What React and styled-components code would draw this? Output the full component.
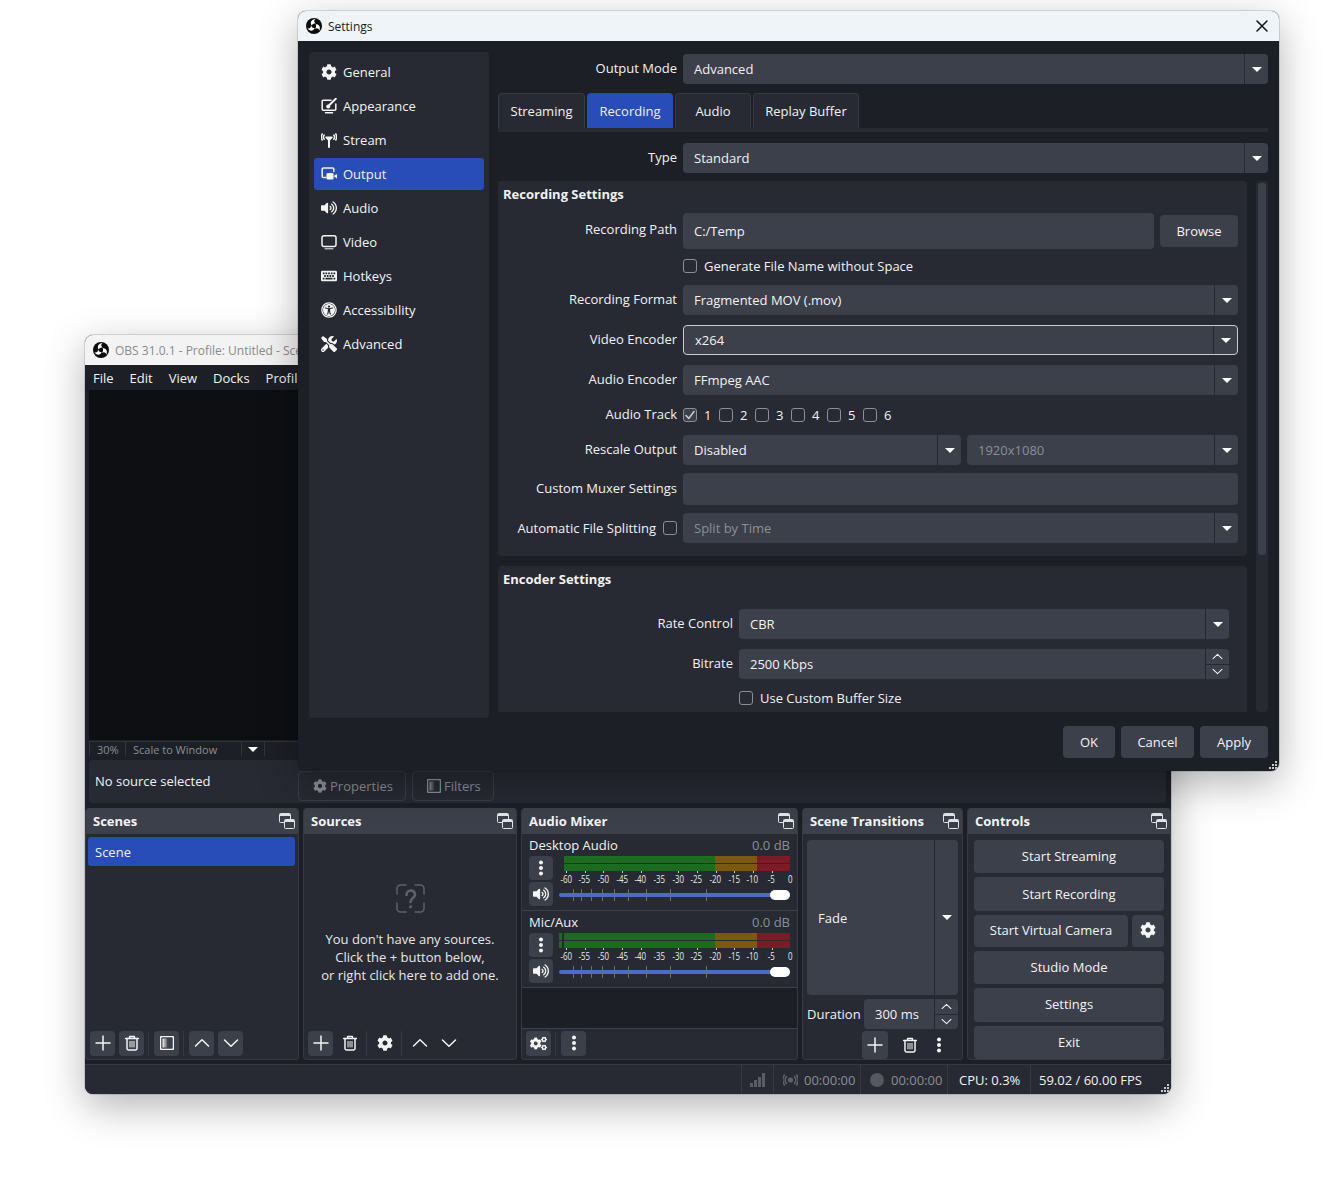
import React from 'react'
import styled, { createGlobalStyle } from 'styled-components'
import { FaCog, FaCogs, FaKeyboard, FaTools, FaUniversalAccess, FaVolumeUp } from 'react-icons/fa'

const bg = '#1d1f26'
const panel = '#272a33'
const field = '#3c404b'
const blue = '#284cb8'
const dim = '#8b8e95'

const Global = createGlobalStyle`
  html, body { margin: 0; padding: 0; background: #fff; }
  body { font-family: "Open Sans", "Noto Sans", sans-serif; font-size: 13px; color: #f2f2f2; }
  * { box-sizing: border-box; }
`

const Desktop = styled.div`
  position: relative;
  width: 1339px;
  height: 1185px;
  overflow: hidden;
  background: #fff;
`

/* ---------- icons ---------- */

const Svg = styled.svg`
  display: block;
  flex: none;
  fill: none;
  stroke: currentColor;
  stroke-width: 1.5;
  stroke-linecap: round;
  stroke-linejoin: round;
`

const Logo = () => (
  <svg width="16" height="16" viewBox="-8 -8 16 16" style={{ flex: 'none' }}>
    <circle r="8" fill="#0b0b0b" />
    {[0, 120, 240].map((a) => (
      <path
        key={a}
        transform={`rotate(${a})`}
        fill="#fff"
        d="M-2.3-.6C-4.4-3.2-2.6-6.6 1.4-6.9-.4-5.3-.1-3.5 1.9-2.3.4-2.7-1.3-2-2.3-.6Z"
      />
    ))}
  </svg>
)

const AppearanceIcon = () => (
  <Svg width="16" height="16" viewBox="0 0 16 16">
    <path d="M10 2.2H2.2a1 1 0 0 0-1 1v8a1 1 0 0 0 1 1h11.6a1 1 0 0 0 1-1V6" />
    <path d="M4.5 14.7h7" />
    <path d="M14.8 .8 8.4 7" strokeWidth="2" />
    <circle cx="7.2" cy="8.4" r="2" fill="currentColor" stroke="none" />
  </Svg>
)

const StreamIcon = () => (
  <Svg width="16" height="16" viewBox="0 0 16 16" strokeWidth="1">
    <path d="M8 15V6.5" strokeWidth="2" />
    <path d="M5 5.2h6L8 8.5Z" fill="currentColor" />
    <path d="M3.2 3c-.9 1.2-.9 3 0 4.2M1.2 2c-1 1.7-1 4.3 0 6M12.8 3c.9 1.2.9 3 0 4.2M14.8 2c1 1.7 1 4.3 0 6" />
  </Svg>
)

const OutputIcon = () => (
  <Svg width="16" height="16" viewBox="0 0 16 16">
    <path d="M5 11.5H2.2a1 1 0 0 1-1-1V3a1 1 0 0 1 1-1h9.6a1 1 0 0 1 1 1v2.4" />
    <rect x="5.5" y="7" width="7" height="6.5" rx="1.3" fill="currentColor" stroke="none" />
    <path d="M12.5 10 16 8v4.6Z" fill="currentColor" stroke="none" />
  </Svg>
)

const VideoIcon = () => (
  <Svg width="16" height="16" viewBox="0 0 16 16">
    <rect x="1" y="1.8" width="14" height="10.6" rx="2" />
    <path d="M4 14.8h8" strokeWidth="1" />
  </Svg>
)

const TrashIcon = () => (
  <Svg width="16" height="16" viewBox="0 0 16 16" strokeWidth="1.4">
    <path d="M1.6 3.4h12.8M5.6 3.2V1.4h4.8v1.8" />
    <path d="M3 3.6v10a1.3 1.3 0 0 0 1.3 1.3h7.4a1.3 1.3 0 0 0 1.3-1.3v-10" />
    <path d="M6 6.4v5.6M8 6.4v5.6M10 6.4v5.6" strokeWidth="1" />
  </Svg>
)

const PlusIcon = () => (
  <Svg width="16" height="16" viewBox="0 0 16 16" strokeWidth="2" strokeLinecap="butt">
    <path d="M8 1v14M1 8h14" />
  </Svg>
)

const Chevron = ({ up, size = 16, width = 1.8 }) => (
  <Svg width={size} height={size} viewBox="0 0 16 16" strokeWidth={width}>
    <path d={up ? 'M1.5 11 8 4.8l6.5 6.2' : 'M1.5 5 8 11.2 14.5 5'} />
  </Svg>
)

const DotsIcon = () => (
  <svg width="16" height="16" viewBox="0 0 16 16" fill="currentColor" style={{ display: 'block' }}>
    <circle cx="8" cy="2.4" r="2" />
    <circle cx="8" cy="8" r="2" />
    <circle cx="8" cy="13.6" r="2" />
  </svg>
)

const FilterIcon = ({ id }) => (
  <Svg width="14" height="14" viewBox="0 0 14 14" strokeWidth="1">
    <defs>
      <linearGradient id={id} x1="0" x2="1" y1="0" y2="0">
        <stop offset="0" stopColor="currentColor" />
        <stop offset="1" stopColor="currentColor" stopOpacity="0.1" />
      </linearGradient>
    </defs>
    <rect x=".5" y=".5" width="13" height="13" rx="1.5" />
    <rect x="2.5" y="2.5" width="5" height="9" fill={`url(#${id})`} stroke="none" />
  </Svg>
)

const FloatIcon = () => (
  <svg width="16" height="16" viewBox="0 0 16 16" style={{ display: 'block' }} fill="none" stroke="#e3e4e6">
    <rect x=".5" y=".5" width="11" height="9" rx="1" />
    <path d="M1 2h10" strokeWidth="2" />
    <rect x="5.5" y="6.5" width="10" height="9" rx="1" fill={field} />
    <path d="M6 8h9" strokeWidth="2" />
  </svg>
)

const QuestionIcon = () => (
  <Svg width="29" height="29" viewBox="0 0 29 29" strokeWidth="2" strokeLinecap="butt">
    <path d="M1 10V4.5A3.500 3.500 0 0 1 4.500 1H10M19 1h5.500A3.500 3.500 0 0 1 28 4.500V10M1 19v5.500A3.500 3.500 0 0 0 4.500 28H10M19 28h5.500a3.500 3.500 0 0 0 3.500-3.500V19" />
    <path d="M10.500 11c0-6 8.500-6 8.500-.5 0 3.500-4.500 3.500-4.500 7.500" strokeWidth="2.600" />
    <circle cx="14.500" cy="22.800" r="1.500" fill="currentColor" stroke="none" />
  </Svg>
)

const SignalIcon = () => (
  <svg width="16" height="14" viewBox="0 0 16 14" fill="#5a5d66" style={{ display: 'block' }}>
    <rect x="0" y="10" width="3" height="4" />
    <rect x="4" y="7" width="3" height="7" />
    <rect x="8" y="4" width="3" height="10" />
    <rect x="12" y="0" width="3" height="14" />
  </svg>
)

const BroadcastIcon = () => (
  <Svg width="15" height="12" viewBox="0 0 15 12" strokeWidth="1.2" color="#5f626b">
    <circle cx="7.5" cy="6" r="2.600" fill="currentColor" stroke="none" />
    <path d="M3.500 2.500c-1.600 2-1.600 5 0 7M1.500 1c-2 3-2 7 0 10M11.500 2.500c1.600 2 1.600 5 0 7M13.500 1c2 3 2 7 0 10" />
  </Svg>
)

const GripDots = () => (
  <svg width="9" height="9" viewBox="0 0 9 9" fill="#c9cacd" style={{ display: 'block' }}>
    <rect x="6" y="0" width="2" height="2" />
    <rect x="3" y="3" width="2" height="2" />
    <rect x="6" y="3" width="2" height="2" />
    <rect x="0" y="6" width="2" height="2" />
    <rect x="3" y="6" width="2" height="2" />
    <rect x="6" y="6" width="2" height="2" />
  </svg>
)

/* ---------- windows ---------- */

const Window = styled.div`
  position: absolute;
  left: ${(p) => p.$x}px;
  top: ${(p) => p.$y}px;
  width: ${(p) => p.$w}px;
  height: ${(p) => p.$h}px;
  display: flex;
  flex-direction: column;
  background: ${bg};
  border-radius: 8px;
  overflow: hidden;
  box-shadow: 0 12px 40px rgba(0, 0, 0, 0.3), 0 0 0 1px rgba(0, 0, 0, 0.12);
`

const TitleBar = styled.div`
  flex: none;
  height: 30px;
  display: flex;
  align-items: center;
  gap: 6px;
  padding: 0 8px;
  font-size: 12px;
  white-space: nowrap;
  overflow: hidden;
  background: ${(p) => (p.$active ? '#eff4f9' : '#f3f3f3')};
  color: ${(p) => (p.$active ? '#1a1a1a' : '#8a8a8a')};
`

const CloseButton = styled.div`
  margin-left: auto;
  margin-right: 1px;
  color: #111;
`

const Grip = styled.div`
  position: absolute;
  right: 1px;
  bottom: 1px;
`

/* ---------- main window ---------- */

const MenuBar = styled.div`
  flex: none;
  height: 25px;
  display: flex;
  align-items: center;
`

const MenuItem = styled.span`
  padding: 0 8px;
`

const Preview = styled.div`
  flex: none;
  height: 350px;
  margin: 0 5px 1px 4px;
  background: #0e0f12;
`

const ScaleBar = styled.div`
  flex: none;
  height: 15px;
  margin: 0 5px 0 4px;
  display: flex;
  align-items: center;
  color: ${dim};
  font-size: 11px;
  border-top: 1px solid #31343d;
`

const ScaleCell = styled.div`
  width: ${(p) => p.$w}px;
  height: 100%;
  display: flex;
  align-items: center;
  justify-content: ${(p) => (p.$center ? 'center' : 'flex-start')};
  padding-left: ${(p) => (p.$center ? 0 : 7)}px;
  border-left: 1px solid #31343d;
  color: ${(p) => (p.$center ? '#fff' : dim)};
`

const Triangle = styled.span`
  display: block;
  width: 0;
  height: 0;
  border-left: 5px solid transparent;
  border-right: 5px solid transparent;
  border-top: 5px solid ${(p) => (p.$dim ? '#9a9ca2' : '#fff')};
`

const ContextBar = styled.div`
  flex: none;
  height: 43px;
  margin: 4px 5px 5px 4px;
  padding-left: 6px;
  display: flex;
  align-items: center;
  background: ${panel};
  border-radius: 4px;
`

const NoSource = styled.div`
  width: 203px;
  padding-bottom: 1px;
`

const GhostButton = styled.div`
  height: 30px;
  margin: 8px 6px 0 0;
  width: ${(p) => p.$w}px;
  padding-left: 14px;
  display: flex;
  align-items: center;
  gap: 3px;
  color: ${dim};
  border: 1px solid #3a3d47;
  border-radius: 4px;
`

const Docks = styled.div`
  flex: none;
  height: 252px;
  display: flex;
  gap: 4px;
`

const Dock = styled.section`
  width: ${(p) => p.$w}px;
  display: flex;
  flex-direction: column;
  background: ${panel};
  border: 1px solid #363944;
  border-top: 0;
  border-radius: 4px;
  overflow: hidden;
`

const DockHead = styled.header`
  flex: none;
  height: 26px;
  margin: 0 -1px;
  padding: 0 4px 0 8px;
  display: flex;
  align-items: center;
  justify-content: space-between;
  background: ${field};
  font-weight: 700;
  color: #f4f4f4;
`

const DockBody = styled.div`
  flex: 1;
  min-height: 0;
`

const SceneRow = styled.div`
  height: 29px;
  margin: 3px 3px 0 2px;
  padding-left: 7px;
  display: flex;
  align-items: center;
  background: ${blue};
  border-radius: 3px;
`

const EmptySources = styled.div`
  height: 100%;
  padding-top: 50px;
  display: flex;
  flex-direction: column;
  align-items: center;
  gap: 17px;
  color: #5e616b;
`

const EmptyText = styled.div`
  text-align: center;
  line-height: 18px;
  color: #e8e8e8;
`

const Toolbar = styled.div`
  flex: none;
  height: 30px;
  padding: 0 0 2px 4px;
  display: flex;
  align-items: center;
`

const ToolButton = styled.div`
  flex: none;
  width: ${(p) => p.$w || 25}px;
  height: ${(p) => p.$h || 25}px;
  margin-right: 4px;
  display: flex;
  align-items: center;
  justify-content: center;
  color: #f4f4f4;
  border-radius: 4px;
  background: ${(p) => (p.$plain ? 'transparent' : field)};
`

const ToolSep = styled.div`
  flex: none;
  width: 1px;
  height: 25px;
  margin-right: 5px;
  background: #363944;
`

/* audio mixer */

const Strip = styled.div`
  flex: none;
  height: 77px;
  padding: 0 7px;
  border-bottom: 1px solid #3c404b;
`

const StripHead = styled.div`
  height: 22px;
  display: flex;
  align-items: center;
  justify-content: space-between;
`

const DbValue = styled.span`
  color: ${dim};
`

const StripBody = styled.div`
  display: grid;
  grid-template-columns: 24px 231px;
  column-gap: 6px;
`

const StripButtons = styled.div`
  display: flex;
  flex-direction: column;
  gap: 2px;
`

const StripButton = styled.div`
  height: 24px;
  display: flex;
  align-items: center;
  justify-content: center;
  background: ${field};
  border-radius: 4px;
  color: #f4f4f4;
`

const Meter = styled.div`
  height: 15px;
  display: flex;
  flex-direction: column;
  justify-content: space-between;
`

const MeterLine = styled.div`
  height: 7px;
  display: flex;
`

const MeterPart = styled.div`
  width: ${(p) => p.$w}px;
  background: ${(p) => p.$c};
`

const MeterScale = styled.div`
  height: 14px;
  margin-left: -2.4px;
  display: grid;
  grid-template-columns: repeat(13, 18.7px);
  background: repeating-linear-gradient(90deg, transparent 0 9px, #c8c9cc 9px 10px, transparent 10px 18.7px) 0 0 / 100% 2px no-repeat;
`

const ScaleNum = styled.span`
  text-align: center;
  font-size: 11px;
  line-height: 15px;
  transform: scaleX(0.72);
  color: #e8e8e8;
`

const Slider = styled.div`
  position: relative;
  height: 20px;
  display: flex;
  align-items: center;
`

const SliderTrack = styled.div`
  width: 100%;
  height: 4px;
  border-radius: 2px;
  background: #4b6cc9;
`

const SliderTick = styled.span`
  position: absolute;
  top: 4px;
  width: 1px;
  height: 12px;
  background: #6b6e78;
`

const SliderHandle = styled.span`
  position: absolute;
  right: 0;
  top: 5px;
  width: 20px;
  height: 10px;
  border-radius: 5px;
  background: #fff;
`

const MixerFill = styled.div`
  flex: 1;
  background: ${bg};
  border-bottom: 1px solid #3c404b;
`

/* transitions */

const TransitionBody = styled.div`
  flex: 1;
  padding: 6px 4px 0 4px;
  display: flex;
  flex-direction: column;
`

const DurationRow = styled.div`
  margin-top: 4px;
  display: flex;
  align-items: center;
  gap: 4px;
`

const DurationLabel = styled.span`
  width: 53px;
  flex: none;
  padding-bottom: 1px;
  white-space: nowrap;
`

const TransitionTools = styled.div`
  margin: 2px 0 0 55px;
  display: flex;
  align-items: center;
`

/* controls */

const ControlStack = styled.div`
  flex: 1;
  padding: 6px 6px 0 6px;
  display: flex;
  flex-direction: column;
  gap: 4px;
`

const ControlLine = styled.div`
  display: flex;
  gap: 4px;
`

const PushButton = styled.div`
  flex: ${(p) => (p.$w ? 'none' : 1)};
  width: ${(p) => (p.$w ? `${p.$w}px` : 'auto')};
  height: ${(p) => p.$h || 32}px;
  display: flex;
  align-items: center;
  justify-content: center;
  background: ${field};
  border-radius: 4px;
  color: #f4f4f4;
  padding-bottom: 1px;
  margin-top: ${(p) => p.$top || 0}px;
`

/* status bar */

const StatusBar = styled.footer`
  position: relative;
  flex: none;
  height: 30px;
  margin-top: 4px;
  display: flex;
  justify-content: flex-end;
  background: ${panel};
  border-top: 1px solid #363944;
`

const StatusCell = styled.div`
  width: ${(p) => p.$w}px;
  display: flex;
  align-items: center;
  gap: ${(p) => p.$gap || 0}px;
  padding-left: ${(p) => p.$pad || 0}px;
  border-left: 1px solid #363944;
  color: ${(p) => (p.$dim ? dim : '#f2f2f2')};
`

const RecDot = styled.span`
  width: 14px;
  height: 14px;
  border-radius: 50%;
  background: #555862;
`

/* ---------- shared inputs ---------- */

const ComboBox = styled.div`
  flex: ${(p) => (p.$w ? 'none' : 1)};
  width: ${(p) => (p.$w ? `${p.$w}px` : 'auto')};
  min-width: 0;
  height: ${(p) => p.$h || 30}px;
  padding-left: 11px;
  display: flex;
  align-items: center;
  justify-content: space-between;
  background: ${field};
  border-radius: 4px;
  border: ${(p) => (p.$focus ? '1px solid #c9cbd0' : '0')};
  color: ${(p) => (p.$off ? dim : '#f2f2f2')};
`

const ComboArrow = styled.div`
  flex: none;
  width: 24px;
  height: 100%;
  display: flex;
  align-items: center;
  justify-content: center;
  border-left: 1px solid #262830;
`

const SpinButtons = styled.div`
  flex: none;
  width: 24px;
  height: 100%;
  display: flex;
  flex-direction: column;
  border-left: 1px solid #262830;
`

const SpinPart = styled.div`
  flex: 1;
  display: flex;
  align-items: center;
  justify-content: center;
  color: #f2f2f2;
  &:first-child {
    border-bottom: 1px solid #262830;
  }
`

const Combo = ({ children, w, h, off, focus }) => (
  <ComboBox $w={w} $h={h} $off={off} $focus={focus}>
    <span>{children}</span>
    <ComboArrow>
      <Triangle />
    </ComboArrow>
  </ComboBox>
)

const Spin = ({ children, w }) => (
  <ComboBox $w={w}>
    <span>{children}</span>
    <SpinButtons>
      <SpinPart>
        <Chevron up size={11} width={1.5} />
      </SpinPart>
      <SpinPart>
        <Chevron size={11} width={1.5} />
      </SpinPart>
    </SpinButtons>
  </ComboBox>
)

const CheckBox = styled.span`
  flex: none;
  width: 14px;
  height: 14px;
  display: flex;
  align-items: center;
  justify-content: center;
  border: 1px solid #8b8e95;
  border-radius: 3px;
  background: ${(p) => (p.$on ? '#3c404b' : 'transparent')};
  color: #c9cbd0;
`

const Tick = () => (
  <Svg width="10" height="10" viewBox="0 0 10 10" strokeWidth="1.2">
    <path d="M1 5.500 3.800 8.500 9 1.500" />
  </Svg>
)

/* ---------- settings ---------- */

const SettingsBody = styled.div`
  flex: 1;
  padding: 11px 11px 13px 11px;
  display: grid;
  grid-template-columns: 180px 770px;
  grid-template-rows: 666px 32px;
  column-gap: 9px;
  row-gap: 8px;
`

const Sidebar = styled.nav`
  padding: 4px 5px;
  display: flex;
  flex-direction: column;
  gap: 2px;
  background: ${panel};
  border-radius: 4px;
`

const NavItem = styled.div`
  height: 32px;
  padding-left: 7px;
  display: flex;
  align-items: center;
  gap: 6px;
  border-radius: 3px;
  background: ${(p) => (p.$active ? blue : 'transparent')};
  color: #f4f4f4;
`

const Content = styled.div`
  min-height: 0;
  display: flex;
  flex-direction: column;
`

const TopRow = styled.div`
  margin-top: ${(p) => p.$top}px;
  flex: none;
  display: flex;
  align-items: center;
  gap: 6px;
`

const RowLabel = styled.span`
  flex: none;
  width: ${(p) => p.$w}px;
  text-align: right;
  padding-bottom: 2px;
  white-space: nowrap;
`

const TabStrip = styled.div`
  flex: none;
  height: 39px;
  margin-top: 9px;
  display: flex;
  align-items: flex-start;
  border-bottom: 4px solid #282b33;
`

const Tab = styled.div`
  width: ${(p) => p.$w}px;
  height: 35px;
  margin-right: ${(p) => p.$gap}px;
  display: flex;
  align-items: center;
  justify-content: center;
  border-radius: 4px 4px 0 0;
  background: ${(p) => (p.$active ? blue : panel)};
  border: 1px solid ${(p) => (p.$active ? blue : '#363944')};
  border-bottom: 0;
`

const ScrollArea = styled.div`
  flex: none;
  height: 531px;
  margin-top: 8px;
  display: flex;
  gap: 9px;
`

const Panels = styled.div`
  flex: none;
  width: 749px;
  height: 100%;
  overflow: hidden;
  display: flex;
  flex-direction: column;
  gap: 10px;
`

const Group = styled.section`
  flex: none;
  height: ${(p) => p.$h}px;
  padding-right: ${(p) => p.$right}px;
  background: ${panel};
  border-radius: 4px;
`

const GroupTitle = styled.h3`
  height: 26px;
  margin: 0;
  padding-left: 5px;
  display: flex;
  align-items: center;
  font-size: 13px;
  font-weight: 700;
`

const Row = styled.div`
  margin-top: ${(p) => p.$top ?? 10}px;
  display: flex;
  align-items: center;
  gap: 6px;
`

const CheckLabel = styled.label`
  display: flex;
  align-items: center;
  gap: 7px;
  height: 18px;
`

const TrackList = styled.div`
  display: flex;
  height: 18px;
`

const TrackItem = styled.label`
  width: 36px;
  display: flex;
  align-items: center;
  gap: 7px;
`

const LabelWithCheck = styled.div`
  flex: none;
  width: 179px;
  display: flex;
  align-items: center;
  justify-content: flex-end;
  gap: 7px;
  white-space: nowrap;
`

const ScrollTrack = styled.div`
  flex: none;
  width: 12px;
  height: 100%;
  padding: 2px;
  background: ${panel};
  border-radius: 4px;
`

const ScrollThumb = styled.div`
  height: 372px;
  border-radius: 3px;
  background: ${field};
`

const DialogButtons = styled.div`
  grid-column: 2;
  display: flex;
  justify-content: flex-end;
  gap: 6px;
`

const navItems = [
  ['General', <FaCog size={16} />],
  ['Appearance', <AppearanceIcon />],
  ['Stream', <StreamIcon />],
  ['Output', <OutputIcon />],
  ['Audio', <FaVolumeUp size={16} />],
  ['Video', <VideoIcon />],
  ['Hotkeys', <FaKeyboard size={16} />],
  ['Accessibility', <FaUniversalAccess size={16} />],
  ['Advanced', <FaTools size={16} />],
]

const tabs = [
  ['Streaming', 87, 2],
  ['Recording', 86, 2],
  ['Audio', 76, 2],
  ['Replay Buffer', 106, 0],
]

const meterTicks = [14, 22, 32, 43, 55, 69, 87, 111, 147]
const scaleNums = ['-60', '-55', '-50', '-45', '-40', '-35', '-30', '-25', '-20', '-15', '-10', '-5', '0']

const AudioStrip = ({ name, lead }) => (
  <Strip>
    <StripHead>
      <span>{name}</span>
      <DbValue>0.0 dB</DbValue>
    </StripHead>
    <StripBody>
      <StripButtons>
        <StripButton>
          <DotsIcon />
        </StripButton>
        <StripButton>
          <FaVolumeUp size={16} />
        </StripButton>
      </StripButtons>
      <div>
        <Meter>
          {[0, 1].map((i) => (
            <MeterLine key={i}>
              <MeterPart $w={3} $c={lead ? '#1d6b1f' : 'transparent'} />
              <MeterPart $w={2} $c="transparent" />
              <MeterPart $w={151} $c="#1d6b1f" />
              <MeterPart $w={42} $c="#7b5a10" />
              <MeterPart $w={33} $c="#7c1a25" />
            </MeterLine>
          ))}
        </Meter>
        <MeterScale>
          {scaleNums.map((n) => (
            <ScaleNum key={n}>{n}</ScaleNum>
          ))}
        </MeterScale>
        <Slider>
          <SliderTrack />
          {meterTicks.map((x) => (
            <SliderTick key={x} style={{ left: x }} />
          ))}
          <SliderHandle />
        </Slider>
      </div>
    </StripBody>
  </Strip>
)

const DockHeader = ({ title }) => (
  <DockHead>
    {title}
    <FloatIcon />
  </DockHead>
)

const MainWindow = () => (
  <Window $x={85} $y={335} $w={1086} $h={759}>
    <TitleBar>
      <Logo />
      OBS 31.0.1 - Profile: Untitled - Scenes: Untitled
    </TitleBar>
    <MenuBar>
      {['File', 'Edit', 'View', 'Docks', 'Profile', 'Scene Collection', 'Tools', 'Help'].map((m) => (
        <MenuItem key={m}>{m}</MenuItem>
      ))}
    </MenuBar>
    <Preview />
    <ScaleBar>
      <ScaleCell $w={36}>30%</ScaleCell>
      <ScaleCell $w={116}>Scale to Window</ScaleCell>
      <ScaleCell $w={23} $center>
        <Triangle />
      </ScaleCell>
      <ScaleCell $w={20} />
    </ScaleBar>
    <ContextBar>
      <NoSource>No source selected</NoSource>
      <GhostButton $w={108}>
        <FaCog size={14} />
        Properties
      </GhostButton>
      <GhostButton $w={82}>
        <FilterIcon id="ctx-filter" />
        Filters
      </GhostButton>
    </ContextBar>
    <Docks>
      <Dock $w={214}>
        <DockHeader title="Scenes" />
        <DockBody>
          <SceneRow>Scene</SceneRow>
        </DockBody>
        <Toolbar>
          <ToolButton><PlusIcon /></ToolButton>
          <ToolButton><TrashIcon /></ToolButton>
          <ToolSep />
          <ToolButton><FilterIcon id="scene-filter" /></ToolButton>
          <ToolSep />
          <ToolButton><Chevron up /></ToolButton>
          <ToolButton><Chevron /></ToolButton>
        </Toolbar>
      </Dock>
      <Dock $w={214}>
        <DockHeader title="Sources" />
        <DockBody>
          <EmptySources>
            <QuestionIcon />
            <EmptyText>
              You don't have any sources.
              <br />
              Click the + button below,
              <br />
              or right click here to add one.
            </EmptyText>
          </EmptySources>
        </DockBody>
        <Toolbar>
          <ToolButton><PlusIcon /></ToolButton>
          <ToolButton $plain><TrashIcon /></ToolButton>
          <ToolSep />
          <ToolButton $plain><FaCog size={16} /></ToolButton>
          <ToolSep />
          <ToolButton $plain><Chevron up /></ToolButton>
          <ToolButton $plain><Chevron /></ToolButton>
        </Toolbar>
      </Dock>
      <Dock $w={277}>
        <DockHeader title="Audio Mixer" />
        <AudioStrip name="Desktop Audio" />
        <AudioStrip name="Mic/Aux" lead />
        <MixerFill />
        <Toolbar>
          <ToolButton><FaCogs size={17} /></ToolButton>
          <ToolSep />
          <ToolButton><DotsIcon /></ToolButton>
        </Toolbar>
      </Dock>
      <Dock $w={161}>
        <DockHeader title="Scene Transitions" />
        <TransitionBody>
          <Combo>Fade</Combo>
          <DurationRow>
            <DurationLabel>Duration</DurationLabel>
            <Spin>300 ms</Spin>
          </DurationRow>
          <TransitionTools>
            <ToolButton $w={26} $h={28}><PlusIcon /></ToolButton>
            <ToolButton $plain style={{ marginLeft: 5 }}><TrashIcon /></ToolButton>
            <ToolButton $plain><DotsIcon /></ToolButton>
          </TransitionTools>
        </TransitionBody>
      </Dock>
      <Dock $w={204}>
        <DockHeader title="Controls" />
        <ControlStack>
          <PushButton>Start Streaming</PushButton>
          <PushButton>Start Recording</PushButton>
          <ControlLine>
            <PushButton>Start Virtual Camera</PushButton>
            <PushButton $w={32}><FaCog size={16} /></PushButton>
          </ControlLine>
          <PushButton>Studio Mode</PushButton>
          <PushButton>Settings</PushButton>
          <PushButton>Exit</PushButton>
        </ControlStack>
      </Dock>
    </Docks>
    <StatusBar>
      <StatusCell $w={32} $pad={8}><SignalIcon /></StatusCell>
      <StatusCell $w={87} $pad={9} $gap={6} $dim><BroadcastIcon />00:00:00</StatusCell>
      <StatusCell $w={87} $pad={9} $gap={7} $dim><RecDot />00:00:00</StatusCell>
      <StatusCell $w={83} $pad={11}>CPU: 0.3%</StatusCell>
      <StatusCell $w={141} $pad={8}>59.02 / 60.00 FPS</StatusCell>
      <Grip><GripDots /></Grip>
    </StatusBar>
  </Window>
)

const SettingsWindow = () => (
  <Window $x={298} $y={11} $w={981} $h={760}>
    <TitleBar $active>
      <Logo />
      Settings
      <CloseButton>
        <Svg width="16" height="16" viewBox="0 0 16 16" strokeWidth="1.2">
          <path d="M3 3l10 10M13 3 3 13" />
        </Svg>
      </CloseButton>
    </TitleBar>
    <SettingsBody>
      <Sidebar>
        {navItems.map(([name, icon]) => (
          <NavItem key={name} $active={name === 'Output'}>
            {icon}
            {name}
          </NavItem>
        ))}
      </Sidebar>
      <Content>
        <TopRow $top={2}>
          <RowLabel $w={179}>Output Mode</RowLabel>
          <Combo>Advanced</Combo>
        </TopRow>
        <TabStrip>
          {tabs.map(([name, w, gap]) => (
            <Tab key={name} $w={w} $gap={gap} $active={name === 'Recording'}>
              {name}
            </Tab>
          ))}
        </TabStrip>
        <TopRow $top={11}>
          <RowLabel $w={179}>Type</RowLabel>
          <Combo>Standard</Combo>
        </TopRow>
        <ScrollArea>
          <Panels>
            <Group $h={375} $right={9}>
              <GroupTitle>Recording Settings</GroupTitle>
              <Row $top={6}>
                <RowLabel $w={179} style={{ paddingBottom: 4 }}>Recording Path</RowLabel>
                <ComboBox $h={36}>C:/Temp</ComboBox>
                <PushButton $w={78}>Browse</PushButton>
              </Row>
              <Row $top={8}>
                <RowLabel $w={179} />
                <CheckLabel><CheckBox />Generate File Name without Space</CheckLabel>
              </Row>
              <Row>
                <RowLabel $w={179}>Recording Format</RowLabel>
                <Combo>Fragmented MOV (.mov)</Combo>
              </Row>
              <Row>
                <RowLabel $w={179}>Video Encoder</RowLabel>
                <Combo focus>x264</Combo>
              </Row>
              <Row>
                <RowLabel $w={179}>Audio Encoder</RowLabel>
                <Combo>FFmpeg AAC</Combo>
              </Row>
              <Row>
                <RowLabel $w={179}>Audio Track</RowLabel>
                <TrackList>
                  {[1, 2, 3, 4, 5, 6].map((n) => (
                    <TrackItem key={n}>
                      <CheckBox $on={n === 1}>{n === 1 && <Tick />}</CheckBox>
                      {n}
                    </TrackItem>
                  ))}
                </TrackList>
              </Row>
              <Row>
                <RowLabel $w={179}>Rescale Output</RowLabel>
                <Combo w={278}>Disabled</Combo>
                <Combo off>1920x1080</Combo>
              </Row>
              <Row $top={8}>
                <RowLabel $w={179}>Custom Muxer Settings</RowLabel>
                <ComboBox $h={32} />
              </Row>
              <Row $top={8}>
                <LabelWithCheck>
                  Automatic File Splitting
                  <CheckBox />
                </LabelWithCheck>
                <Combo off>Split by Time</Combo>
              </Row>
            </Group>
            <Group $h={200} $right={18}>
              <GroupTitle>Encoder Settings</GroupTitle>
              <Row $top={17}>
                <RowLabel $w={235}>Rate Control</RowLabel>
                <Combo>CBR</Combo>
              </Row>
              <Row>
                <RowLabel $w={235}>Bitrate</RowLabel>
                <Spin>2500 Kbps</Spin>
              </Row>
              <Row>
                <RowLabel $w={235} />
                <CheckLabel><CheckBox />Use Custom Buffer Size</CheckLabel>
              </Row>
            </Group>
          </Panels>
          <ScrollTrack>
            <ScrollThumb />
          </ScrollTrack>
        </ScrollArea>
      </Content>
      <DialogButtons>
        <PushButton $w={52}>OK</PushButton>
        <PushButton $w={73}>Cancel</PushButton>
        <PushButton $w={68}>Apply</PushButton>
      </DialogButtons>
    </SettingsBody>
    <Grip><GripDots /></Grip>
  </Window>
)

export default function App() {
  return (
    <Desktop>
      <Global />
      <MainWindow />
      <SettingsWindow />
    </Desktop>
  )
}
